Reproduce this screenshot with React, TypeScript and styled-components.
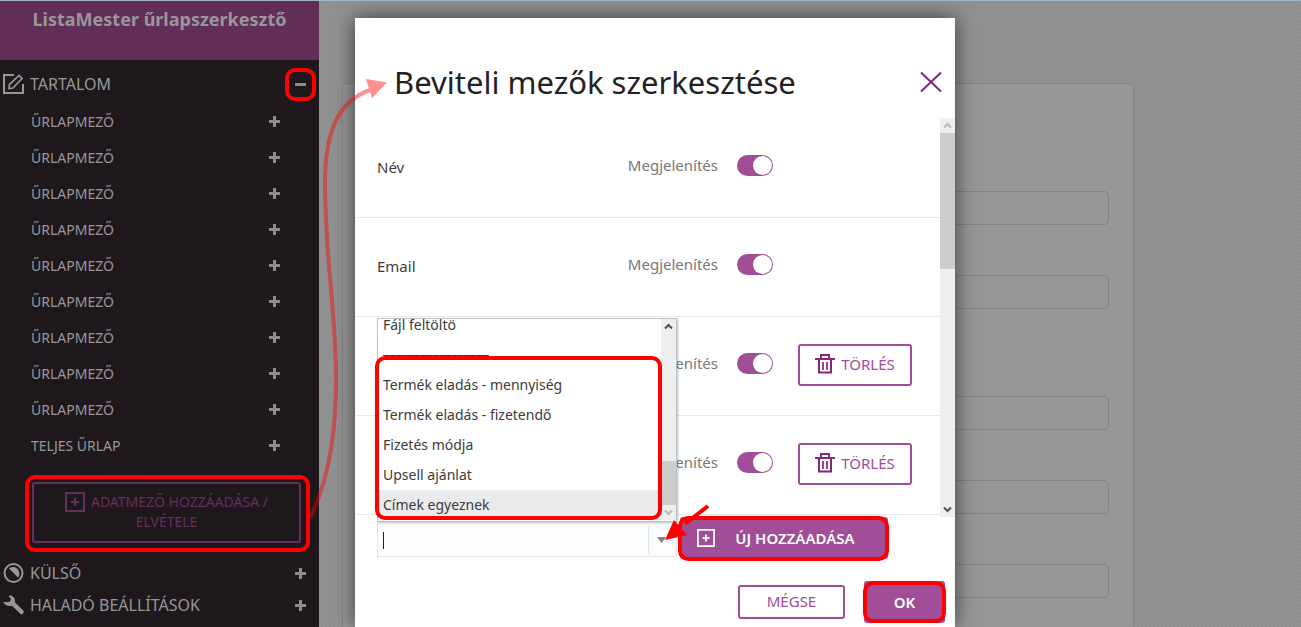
import React from "react";
import styled, { createGlobalStyle } from "styled-components";

const purple = "#a24d98";
const deepPurple = "#84287a";
const dimText = "#989798";
const red = "#ff0000";

const GlobalStyle = createGlobalStyle`
  *, *::before, *::after { box-sizing: border-box; }
  body {
    margin: 0;
    font-family: "Noto Sans", "Open Sans", sans-serif;
    color: #3c3c3c;
  }
  button, input { font-family: inherit; }
  button { cursor: pointer; }
`;

/* ---------- page ---------- */

const Page = styled.div`
  position: relative;
  display: flex;
  height: 100vh;
  overflow: hidden;
  border-top: 1px solid #a3b4c3;
  background: #919191;
`;

const Sidebar = styled.aside`
  flex: 0 0 319px;
  background: #1e171c;
  color: ${dimText};
`;

const Brand = styled.h1`
  margin: 0;
  height: 59px;
  padding-top: 5px;
  background: #622e58;
  font-size: 18px;
  font-weight: 700;
  line-height: 26px;
  text-align: center;
`;

const SectionRow = styled.button<{ $first?: boolean }>`
  display: flex;
  align-items: center;
  gap: 6px;
  width: 100%;
  height: ${(p) => (p.$first ? 43 : 32)}px;
  padding: ${(p) => (p.$first ? "5px" : "0")} 13px 0 3px;
  border: 0;
  background: none;
  color: inherit;
  font-size: 16px;
  text-align: left;
`;

const RowLabel = styled.span`
  flex: 1;
`;

const FieldList = styled.ul`
  margin: 0;
  padding: 0;
  list-style: none;
`;

const FieldRow = styled.button`
  display: flex;
  align-items: center;
  width: 100%;
  height: 36px;
  padding: 0 39px 0 31px;
  border: 0;
  background: none;
  color: inherit;
  font-size: 14px;
  text-align: left;
`;

const AddRemoveButton = styled.button`
  position: relative;
  display: block;
  width: 269px;
  margin: 19px 0 14px 32px;
  padding: 8px 28px 9px;
  border: 2px solid #64305c;
  border-radius: 3px;
  background: none;
  color: #64305c;
  font-size: 14px;
  line-height: 20px;

  svg {
    margin-right: 6px;
    vertical-align: top;
  }
`;

const Mark = styled.span<{ $top: number; $right: number; $bottom: number; $left: number }>`
  position: absolute;
  top: ${(p) => p.$top}px;
  right: ${(p) => p.$right}px;
  bottom: ${(p) => p.$bottom}px;
  left: ${(p) => p.$left}px;
  border: 4px solid ${red};
  border-radius: 10px;
  pointer-events: none;
`;

const MarkedIcon = styled.span`
  position: relative;
  display: flex;
`;

const Workspace = styled.main`
  flex: 1;
  display: flex;
  padding: 82px 167px 0 23px;
  background: linear-gradient(45deg, #8e8e8e 25%, #949494 25% 50%, #8e8e8e 50% 75%, #949494 75%) 0 0 / 4px 4px;
`;

const FormPanel = styled.form`
  flex: 1;
  padding: 57px 24px 0;
  border: 1px solid #848484;
  border-bottom: 0;
  border-radius: 5px 5px 0 0;
  background: #979797;
`;

const FieldGroup = styled.div`
  display: flex;
  flex-direction: column;
  gap: 50px;
  padding-top: 50px;
  padding-bottom: 37px;
`;

const FormInput = styled.input`
  width: 100%;
  height: 34px;
  border: 1px solid #848484;
  border-radius: 5px;
  background: #979797;
`;

/* ---------- dialog ---------- */

const Overlay = styled.div`
  position: absolute;
  inset: 0;
  display: flex;
  justify-content: center;
  padding: 17px 0 0 9px;
`;

const Dialog = styled.section`
  position: relative;
  display: flex;
  flex-direction: column;
  width: 600px;
  background: #fff;
  box-shadow: 0 0 20px rgba(0, 0, 0, 0.6);
`;

const DialogHeader = styled.header`
  flex: none;
  display: flex;
  align-items: center;
  justify-content: space-between;
  height: 100px;
  padding: 27px 13px 0 39px;
`;

const DialogTitle = styled.h2`
  margin: 0;
  color: #222;
  font-size: 31px;
  font-weight: 400;
  line-height: 40px;
`;

const IconButton = styled.button`
  display: flex;
  padding: 0;
  border: 0;
  background: none;
`;

const ScrollArea = styled.div`
  flex: none;
  display: flex;
  height: 399px;
`;

const Rows = styled.div`
  flex: 1;
  padding-top: 1px;
`;

const Row = styled.div`
  display: flex;
  align-items: center;
  height: 99px;
  padding: 0 28px 2px 22px;
  border-bottom: 1px solid #eaeaea;
  font-size: 15px;
`;

const RowName = styled.span`
  flex: 1;
`;

const ToggleLabel = styled.label`
  display: flex;
  align-items: center;
  gap: 19px;
  padding-bottom: 4px;
  color: #777;
`;

const Toggle = styled.input`
  appearance: none;
  display: flex;
  justify-content: flex-end;
  width: 36px;
  height: 21px;
  margin: 0;
  padding: 1px;
  border-radius: 11px;
  background: ${purple};

  &::before {
    content: "";
    width: 19px;
    height: 19px;
    border-radius: 50%;
    background: #fff;
  }
`;

const RowAction = styled.div`
  display: flex;
  justify-content: flex-end;
  width: 139px;
`;

const OutlineButton = styled.button<{ $width: number; $height: number }>`
  display: flex;
  align-items: center;
  justify-content: center;
  gap: 6px;
  width: ${(p) => p.$width}px;
  height: ${(p) => p.$height}px;
  padding: 0 0 2px;
  border: 2px solid ${purple};
  border-radius: 3px;
  background: #fff;
  color: ${purple};
  font-size: 15px;
`;

const SolidButton = styled.button<{ $width: number; $withIcon?: boolean }>`
  position: relative;
  display: flex;
  align-items: center;
  justify-content: center;
  gap: 20px;
  width: ${(p) => p.$width}px;
  height: 42px;
  padding: 0 ${(p) => (p.$withIcon ? 16 : 0)}px 0 0;
  border: 0;
  border-radius: 3px;
  background: ${purple};
  color: #fff;
  font-size: 15px;
  font-weight: 600;
`;

const ScrollTrack = styled.div`
  flex: 0 0 15px;
  display: flex;
  flex-direction: column;
  align-items: center;
  background: #efefef;
`;

const ScrollArrow = styled.span`
  display: flex;
  align-items: center;
  justify-content: center;
  height: 15px;
`;

const ScrollThumb = styled.span<{ $size: number; $atEnd?: boolean }>`
  width: 100%;
  height: ${(p) => p.$size}px;
  margin-top: ${(p) => (p.$atEnd ? "auto" : "0")};
  margin-bottom: ${(p) => (p.$atEnd ? "0" : "auto")};
  background: #cdcdcd;
`;

const AddBar = styled.div`
  flex: none;
  display: flex;
  align-items: center;
  gap: 3px;
  height: 42px;
  padding-left: 22px;
`;

const Combo = styled.div`
  position: relative;
  display: flex;
  align-items: center;
  width: 300px;
  height: 38px;
  padding: 4px 0 0 5px;
  border: 1px solid #e1e4e6;
  background: #fcfdfe;
`;

const Caret = styled.span`
  width: 1px;
  height: 17px;
  background: #222;
`;

const ComboInput = styled.input`
  flex: 1;
  min-width: 0;
  border: 0;
  outline: 0;
  background: none;
  font-size: 14px;
`;

const ComboArrow = styled.button`
  display: flex;
  align-items: center;
  justify-content: center;
  width: 28px;
  height: 28px;
  padding: 0 2px 0 0;
  border: 0;
  border-left: 1px solid #e1e4e6;
  background: none;
`;

const Popup = styled.div`
  position: absolute;
  left: -1px;
  right: -1px;
  bottom: 34px;
  display: flex;
  height: 204px;
  padding-bottom: 1px;
  border: 1px solid #b9c3cc;
  background: #fff;
  box-shadow: 1px 1px 2px rgba(0, 0, 0, 0.25);
`;

const Options = styled.ul`
  flex: 1;
  display: flex;
  flex-direction: column;
  justify-content: flex-end;
  margin: 0;
  padding: 0;
  overflow: hidden;
  list-style: none;
`;

const Option = styled.li<{ $active?: boolean; $divider?: boolean }>`
  flex: 0 0 30px;
  padding-left: 5px;
  background: ${(p) => (p.$active ? "#eaebed" : "#fff")};
  font-size: 14px;
  line-height: ${(p) => (p.$divider ? 18 : 29)}px;
`;

const DialogFooter = styled.footer`
  flex: none;
  display: flex;
  align-items: center;
  justify-content: flex-end;
  gap: 19px;
  padding: 22px 10px 0;
`;

const CurveArrow = styled.svg`
  position: absolute;
  left: -55px;
  top: 52px;
  pointer-events: none;
`;

const ShortArrow = styled.svg`
  position: absolute;
  left: 285px;
  top: -20px;
  z-index: 1;
  pointer-events: none;
`;

/* ---------- icons ---------- */

const PlusIcon = ({ minus }: { minus?: boolean }) => (
  <svg width="11" height="11" viewBox="0 0 11 11" stroke="#8d8c8d" strokeWidth="3" fill="none">
    <path d={minus ? "M0 5.5H11" : "M0 5.5H11M5.5 0V11"} />
  </svg>
);

const BoxPlusIcon = ({ size, color }: { size: number; color: string }) => (
  <svg width={size} height={size} viewBox="0 0 20 20" stroke={color} strokeWidth="2" fill="none">
    <path d="M1 1H19V19H1ZM6 10H14M10 6V14" />
  </svg>
);

const EditIcon = () => (
  <svg width="21" height="20" viewBox="0 0 21 20" stroke={dimText} strokeWidth="2" fill="none">
    <path d="M11 1H1V19H20V10" />
    <path d="M6 14.5L6.5 10.5L16 1.5L19 4.5L10 14Z" strokeWidth="1.7" />
  </svg>
);

const ContrastIcon = () => (
  <svg width="21" height="20" viewBox="0 0 21 20">
    <circle cx="10.5" cy="10" r="9" stroke={dimText} strokeWidth="2" fill="none" />
    <path d="M6 5.5A6.4 6.4 0 0 1 15 14.5Z" fill={dimText} />
  </svg>
);

const WrenchIcon = () => (
  <svg width="21" height="20" viewBox="0 0 21 20" fill={dimText}>
    <path d="M7 .3C10.5 1 12.6 3.9 11.8 7.2L20.3 15.5C21.6 17 20 19.8 18 19.5L9 10.8C5.500 11.8 1.5 10.3 .3 6.7L4 7.3L7.5 6.3L7.8 3.6L5.5 1.2Z" />
  </svg>
);

const TrashIcon = () => (
  <svg width="20" height="20" viewBox="0 0 20 20" stroke={deepPurple} strokeWidth="2" fill="none">
    <path d="M0 5H20M6 5V1H14V5M4 5V18.5H16V5" />
    <path d="M8 8V16M12 8V16" strokeWidth="1.7" />
  </svg>
);

const CloseIcon = () => (
  <svg width="22" height="22" viewBox="0 0 22 22" stroke={deepPurple} strokeWidth="2" fill="none">
    <path d="M1 1.5L21 20.5M21 1.5L1 20.5" />
  </svg>
);

const Chevron = ({ down, faint }: { down?: boolean; faint?: boolean }) => (
  <svg width="9" height="7" viewBox="0 0 9 7" stroke={faint ? "#b9b9b9" : "#505050"} strokeWidth="2" fill="none">
    <path d={down ? "M1 1.5L4.5 5L8 1.5" : "M1 5.5L4.5 2L8 5.5"} />
  </svg>
);

/* ---------- data ---------- */

const sidebarFields = [...Array(9).fill("ŰRLAPMEZŐ"), "TELJES ŰRLAP"];

const dialogRows = [
  { name: "Név", removable: false },
  { name: "Email", removable: false },
  { name: "", removable: true },
  { name: "", removable: true },
];

const options = [
  "Fájl feltöltö",
  "_________________",
  "Termék eladás - mennyiség",
  "Termék eladás - fizetendő",
  "Fizetés módja",
  "Upsell ajánlat",
  "Címek egyeznek",
];

export default function App() {
  return (
    <Page>
      <GlobalStyle />
      <Sidebar>
        <Brand>ListaMester űrlapszerkesztő</Brand>
        <nav>
          <SectionRow $first aria-expanded="true">
            <EditIcon />
            <RowLabel>TARTALOM</RowLabel>
            <MarkedIcon>
              <PlusIcon minus />
              <Mark $top={-11} $right={-10} $bottom={-11} $left={-10} />
            </MarkedIcon>
          </SectionRow>
          <FieldList>
            {sidebarFields.map((name, i) => (
              <li key={i}>
                <FieldRow>
                  <RowLabel>{name}</RowLabel>
                  <PlusIcon />
                </FieldRow>
              </li>
            ))}
          </FieldList>
          <AddRemoveButton>
            <BoxPlusIcon size={20} color="#64305c" />
            ADATMEZŐ HOZZÁADÁSA / ELVÉTELE
            <Mark $top={-9} $right={-11} $bottom={-11} $left={-9} />
          </AddRemoveButton>
          <SectionRow aria-expanded="false">
            <ContrastIcon />
            <RowLabel>KÜLSŐ</RowLabel>
            <PlusIcon />
          </SectionRow>
          <SectionRow aria-expanded="false">
            <WrenchIcon />
            <RowLabel>HALADÓ BEÁLLÍTÁSOK</RowLabel>
            <PlusIcon />
          </SectionRow>
        </nav>
      </Sidebar>

      <Workspace>
        <FormPanel>
          <FieldGroup>
            <FormInput aria-label="Név" />
            <FormInput aria-label="Email" />
          </FieldGroup>
          <FieldGroup>
            <FormInput aria-label="Űrlapmező 1" />
            <FormInput aria-label="Űrlapmező 2" />
            <FormInput aria-label="Űrlapmező 3" />
          </FieldGroup>
        </FormPanel>
      </Workspace>

      <Overlay>
        <Dialog role="dialog" aria-labelledby="dialog-title">
          <DialogHeader>
            <DialogTitle id="dialog-title">Beviteli mezők szerkesztése</DialogTitle>
            <IconButton aria-label="Bezárás">
              <CloseIcon />
            </IconButton>
          </DialogHeader>

          <ScrollArea>
            <Rows>
              {dialogRows.map((row, i) => (
                <Row key={i}>
                  <RowName>{row.name}</RowName>
                  <ToggleLabel>
                    Megjelenítés
                    <Toggle type="checkbox" defaultChecked />
                  </ToggleLabel>
                  <RowAction>
                    {row.removable && (
                      <OutlineButton $width={114} $height={42}>
                        <TrashIcon />
                        TÖRLÉS
                      </OutlineButton>
                    )}
                  </RowAction>
                </Row>
              ))}
            </Rows>
            <ScrollTrack>
              <ScrollArrow><Chevron faint /></ScrollArrow>
              <ScrollThumb $size={136} />
              <ScrollArrow><Chevron down /></ScrollArrow>
            </ScrollTrack>
          </ScrollArea>

          <AddBar>
            <Combo>
              <Caret />
              <ComboInput role="combobox" aria-expanded="true" aria-controls="field-options" aria-label="Új mező" />
              <ComboArrow aria-label="Lista megnyitása">
                <svg width="9" height="6" viewBox="0 0 9 6" fill="#7d8287">
                  <path d="M0 0H9L4.5 6Z" />
                </svg>
              </ComboArrow>
              <Popup>
                <Options id="field-options" role="listbox">
                  {options.map((option) => (
                    <Option
                      key={option}
                      role="option"
                      aria-selected={option === "Címek egyeznek"}
                      $active={option === "Címek egyeznek"}
                      $divider={option.startsWith("_")}
                    >
                      {option}
                    </Option>
                  ))}
                </Options>
                <ScrollTrack>
                  <ScrollArrow><Chevron /></ScrollArrow>
                  <ScrollThumb $size={44} $atEnd />
                  <ScrollArrow><Chevron down faint /></ScrollArrow>
                </ScrollTrack>
                <Mark $top={37} $right={14} $bottom={1} $left={-3} />
              </Popup>
              <ShortArrow width="50" height="44" viewBox="0 0 50 44">
                <path d="M45 6L22 24" stroke={red} strokeWidth="4" fill="none" />
                <path d="M2 40L11 20L24 35Z" fill={red} />
              </ShortArrow>
            </Combo>
            <SolidButton $width={208} $withIcon>
              <BoxPlusIcon size={18} color="#fff" />
              ÚJ HOZZÁADÁSA
              <Mark $top={-1} $right={-1} $bottom={-2} $left={-2} />
            </SolidButton>
          </AddBar>

          <DialogFooter>
            <OutlineButton $width={107} $height={34}>MÉGSE</OutlineButton>
            <SolidButton $width={81}>
              OK
              <Mark $top={0} $right={-1} $bottom={0} $left={-1} />
            </SolidButton>
          </DialogFooter>

          <CurveArrow width="100" height="470" viewBox="0 0 100 470">
            <g opacity="0.43">
              <path
                d="M10 448C28 412 37 360 36 300C35 240 25 180 25 113C25 55 42 30 70 20"
                stroke={red}
                strokeWidth="4"
                fill="none"
              />
              <path d="M66 9L87 12.5L72 28Z" fill={red} />
            </g>
          </CurveArrow>
        </Dialog>
      </Overlay>
    </Page>
  );
}
